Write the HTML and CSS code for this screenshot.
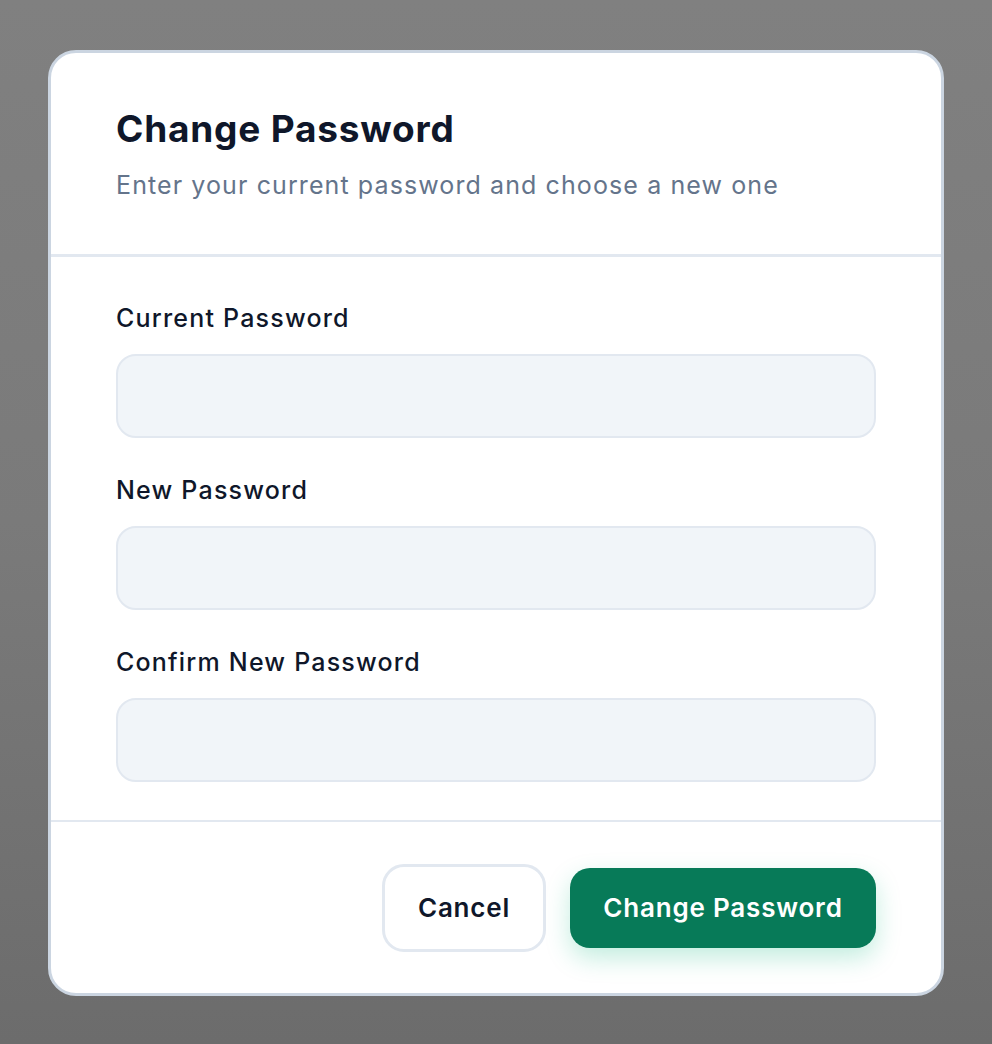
FILE: index.html
```html
<!DOCTYPE html>
<html lang="en">
<head>
<meta charset="utf-8">
<title>Change Password</title>
<link rel="stylesheet" href="styles.css">
</head>
<body>
<div class="backdrop">
  <div class="modal">
    <div class="modal-header">
      <h1 class="title">Change Password</h1>
      <p class="subtitle">Enter your current password and choose a new one</p>
    </div>
    <div class="modal-body">
      <div class="field">
        <label class="label" for="cur">Current Password</label>
        <input class="input" id="cur" type="password">
      </div>
      <div class="field">
        <label class="label" for="new">New Password</label>
        <input class="input" id="new" type="password">
      </div>
      <div class="field">
        <label class="label" for="conf">Confirm New Password</label>
        <input class="input" id="conf" type="password">
      </div>
    </div>
    <div class="modal-footer">
      <button class="btn btn-cancel" type="button">Cancel</button>
      <button class="btn btn-primary" type="button">Change Password</button>
    </div>
  </div>
</div>
</body>
</html>
```
FILE: styles.css
```css
* { box-sizing: border-box; }
html, body { margin: 0; padding: 0; }
body {
  width: 992px;
  height: 1044px;
  overflow: hidden;
  font-family: Inter, "Noto Sans", "Liberation Sans", sans-serif;
  background: linear-gradient(180deg, #808080 0%, #7a7a7a 50%, #6c6c6c 100%);
}
.backdrop {
  padding: 50px 0 0 48px;
}
.modal {
  width: 896px;
  height: 946px;
  background: #ffffff;
  border: 3px solid #cbd5e1;
  border-radius: 28px;
  display: flex;
  flex-direction: column;
  overflow: hidden;
}
.modal-header {
  height: 204px;
  padding: 54px 65px 0 65px;
  border-bottom: 3px solid #e2e8f0;
}
.title {
  margin: 0;
  font-size: 37px;
  line-height: 44px;
  font-weight: 700;
  color: #0f172a;
  letter-spacing: 0.8px;
}
.subtitle {
  margin: 18px 0 0 0;
  font-size: 25px;
  line-height: 32px;
  color: #64748b;
  letter-spacing: 1.1px;
}
.modal-body {
  flex: 1;
  padding: 45px 65px 0 65px;
  display: flex;
  flex-direction: column;
  gap: 36px;
  border-bottom: 2px solid #e2e8f0;
}
.field {
  display: flex;
  flex-direction: column;
  gap: 20px;
}
.label {
  font-size: 25px;
  line-height: 32px;
  font-weight: 500;
  color: #0f172a;
  letter-spacing: 1.2px;
}
.input {
  width: 100%;
  height: 84px;
  background: #f1f5f9;
  border: 2px solid #e2e8f0;
  border-radius: 20px;
  outline: none;
  padding: 0 24px;
  font-size: 22px;
}
.modal-footer {
  height: 171px;
  padding: 0 65px;
  display: flex;
  justify-content: flex-end;
  align-items: center;
  gap: 24px;
}
.btn {
  font-family: Inter, "Noto Sans", "Liberation Sans", sans-serif;
  font-size: 26px;
  font-weight: 600;
  cursor: pointer;
  letter-spacing: 0.8px;
}
.btn-cancel {
  width: 164px;
  height: 88px;
  background: #ffffff;
  border: 3px solid #e2e8f0;
  border-radius: 22px;
  color: #0f172a;
}
.btn-primary {
  width: 306px;
  height: 80px;
  background: #077a58;
  border: none;
  border-radius: 20px;
  color: #ffffff;
  box-shadow: 0 10px 24px rgba(16, 185, 129, 0.25);
}
```
